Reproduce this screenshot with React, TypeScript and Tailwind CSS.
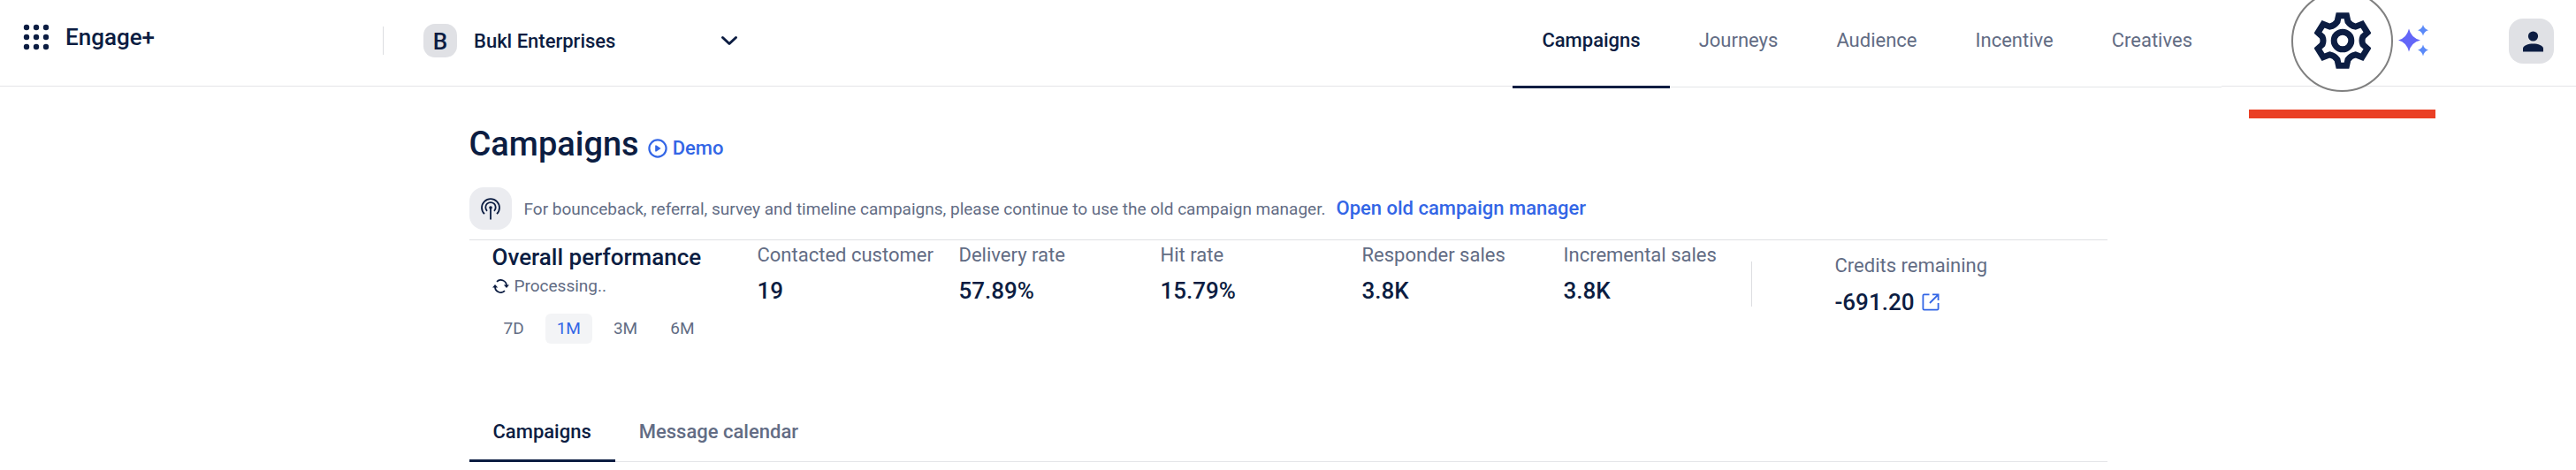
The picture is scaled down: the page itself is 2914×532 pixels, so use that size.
import { useState } from "react";

const navItems = ["Campaigns", "Journeys", "Audience", "Incentive", "Creatives"];

const stats = [
  { label: "Contacted customer", value: "19" },
  { label: "Delivery rate", value: "57.89%" },
  { label: "Hit rate", value: "15.79%" },
  { label: "Responder sales", value: "3.8K" },
  { label: "Incremental sales", value: "3.8K" },
];

const ranges = ["7D", "1M", "3M", "6M"];

const tabs = ["Campaigns", "Message calendar"];

const GridIcon = () => (
  <svg width="30" height="30" viewBox="0 0 30 30" fill="currentColor" aria-hidden="true">
    {[4, 15, 26].map((y) =>
      [4, 15, 26].map((x) => <circle key={`${x}-${y}`} cx={x} cy={y} r="3.2" />)
    )}
  </svg>
);

const ChevronIcon = () => (
  <svg width="20" height="12" viewBox="0 0 20 12" fill="none" stroke="currentColor" strokeWidth="3" strokeLinecap="round" strokeLinejoin="round" aria-hidden="true">
    <path d="M2.5 2.5L10 9.5L17.5 2.5" />
  </svg>
);

const GearIcon = () => (
  <svg width="64" height="64" viewBox="0 0 64 64" fill="none" stroke="currentColor" strokeWidth="7" aria-hidden="true">
    <path d="M27.5 3.7H36.5L38 10.5Q41 15 46.5 16.2L54 13.3L60 23L55 27.5Q53 32 55 36.5L60 41L54 50.7L46.5 47.8Q41 49 38 53.5L36.5 60.3H27.5L26 53.5Q23 49 17.5 47.8L10 50.7L4 41L9 36.5Q11 32 9 27.5L4 23L10 13.3L17.5 16.2Q23 15 26 10.5Z" />
    <circle cx="32" cy="32" r="9.8" />
  </svg>
);

const SparkleIcon = () => (
  <svg width="34" height="36" viewBox="0 0 34 36" aria-hidden="true">
    <path fill="#6366f8" d="M12 4.5Q14.5 15 25 17.5Q14.5 20 12 30.5Q9.5 20 0 17.5Q9.5 15 12 4.5Z" />
    <path fill="#5b8af9" d="M28 0Q29.2 5 34 6.2Q29.2 7.4 28 12.4Q26.8 7.4 22 6.2Q26.8 5 28 0Z" />
    <path fill="#5b8af9" d="M28 22.6Q29.2 27.6 34 28.8Q29.2 30 28 35.5Q26.8 30 22 28.8Q26.8 27.6 28 22.6Z" />
  </svg>
);

const PersonIcon = () => (
  <svg width="23" height="24" viewBox="0 0 23 24" fill="currentColor" aria-hidden="true">
    <circle cx="11.5" cy="6" r="5.6" />
    <path d="M0 23.5V20C0 16.5 6 14.5 11.5 14.5S23 16.5 23 20V23.5Z" />
  </svg>
);

const PlayCircleIcon = () => (
  <svg width="22" height="22" viewBox="0 0 22 22" fill="none" stroke="currentColor" strokeWidth="2.2" aria-hidden="true">
    <circle cx="11" cy="11" r="9.6" />
    <path d="M8.2 7.5H9.5L14.6 11L9.5 14.5H8.2Z" fill="currentColor" stroke="none" />
  </svg>
);

const BroadcastIcon = () => (
  <svg width="24" height="26" viewBox="0 0 24 26" fill="none" stroke="currentColor" strokeWidth="1.8" aria-hidden="true">
    <path d="M5 19.2A10 10 0 1 1 19 19.2" />
    <path d="M8 15.8A5.7 5.7 0 1 1 16 15.8" />
    <path d="M12 12V25.5" />
    <circle cx="12" cy="12" r="1.8" fill="currentColor" stroke="none" />
  </svg>
);

const SyncIcon = () => (
  <svg width="19" height="16" viewBox="0 0 19 16" fill="none" stroke="currentColor" strokeWidth="1.8" aria-hidden="true">
    <path d="M5 2.8A6.5 6.5 0 0 1 16 7.5M14 13.2A6.5 6.5 0 0 1 3 8.5" />
    <path d="M12.8 6.5H19L16 10ZM0 9.5L3 6L6.2 9.5Z" fill="currentColor" stroke="none" />
  </svg>
);

const OpenIcon = () => (
  <svg width="20" height="20" viewBox="0 0 20 20" fill="none" stroke="currentColor" strokeWidth="1.8" aria-hidden="true">
    <path d="M8.5 1.4H2.5Q1.4 1.4 1.4 2.5V17.5Q1.4 18.6 2.5 18.6H17.5Q18.6 18.6 18.6 17.5V11" />
    <path d="M12 1.4H18.6V8M18.6 1.4L9 11" />
  </svg>
);

const Header = () => {
  const [active, setActive] = useState("Campaigns");

  return (
    <header className="relative flex h-[98px] items-center border-b border-[#e4e5e8] pr-[25px] pb-[5px]">
      <div className="flex w-[433px] shrink-0 items-center gap-[18px] pb-2 pl-[26px]">
        <button type="button" aria-label="Apps">
          <GridIcon />
        </button>
        <span className="text-[26px] leading-8 font-medium">Engage+</span>
      </div>
      <div className="h-8 w-px bg-[#dcdde1]" />
      <button type="button" className="ml-[45px] flex w-[356px] shrink-0 items-center text-left">
        <span className="flex size-[38px] items-center justify-center rounded-[13px] bg-[#e0e1e5] pt-px text-[26px] leading-8 font-medium">
          B
        </span>
        <span className="ml-[19px] flex-1 pt-[2px] text-[22px] leading-7 font-medium">Bukl Enterprises</span>
        <ChevronIcon />
      </button>

      <nav className="ml-auto flex h-[99px] shrink-0 items-start self-start border-b border-[#e4e5e8] bg-white">
        {navItems.map((item) => (
          <a
            key={item}
            href="#"
            onClick={() => setActive(item)}
            className={
              item === active
                ? "flex h-[100px] items-center border-b-3 border-[#0c1d42] px-[33px] pb-[6px] text-[22px] font-medium"
                : "flex h-[98px] items-center px-[33px] pb-[7px] text-[22px] text-[#626c84]"
            }
          >
            {item}
          </a>
        ))}
      </nav>
      <button
        type="button"
        aria-label="Settings"
        className="ml-[79px] flex size-[115px] shrink-0 items-center justify-center rounded-full border-2 border-[#808080] bg-white"
      >
        <GearIcon />
      </button>
      <button type="button" aria-label="Assistant" className="ml-[6px]">
        <SparkleIcon />
      </button>
      <button
        type="button"
        aria-label="Account"
        className="ml-[91px] flex size-[51px] shrink-0 items-center justify-center rounded-2xl bg-[#e0e1e5] pt-px pl-[3px]"
      >
        <PersonIcon />
      </button>
      {/* marker under the settings button */}
      <div className="absolute top-[124px] right-[159px] h-[10px] w-[211px] bg-[#ea4025]" />
    </header>
  );
};

const Performance = () => {
  const [range, setRange] = useState("1M");

  return (
    <section className="flex items-start border-t border-[#dfe0e3] pl-[26px]">
      <div className="w-[300px] shrink-0 pt-[3px]">
        <h2 className="text-[26px] leading-8 font-medium">Overall performance</h2>
        <div className="mt-[5px] flex items-center gap-[6px] text-[19px] leading-6">
          <SyncIcon />
          <span className="text-[#626c84]">Processing..</span>
        </div>
        <div className="mt-[19px] flex gap-[11px]">
          {ranges.map((r) => (
            <button
              key={r}
              type="button"
              onClick={() => setRange(r)}
              className={
                r === range
                  ? "h-[34px] rounded-md bg-[#f3f4f6] px-[13px] text-[19px] text-[#3366e6]"
                  : "h-[34px] rounded-md px-[13px] text-[19px] text-[#626c84]"
              }
            >
              {r}
            </button>
          ))}
        </div>
      </div>
      <dl className="flex gap-4 pt-[3px]">
        {stats.map((s) => (
          <div key={s.label} className="w-[212px]">
            <dt className="text-[22px] leading-7 whitespace-nowrap text-[#626c84]">{s.label}</dt>
            <dd className="mt-[10px] text-[26px] leading-8 font-medium">{s.value}</dd>
          </div>
        ))}
      </dl>
      <div className="mt-6 h-[51px] w-px bg-[#dcdde1]" />
      <div className="ml-[94px] pt-[15px]">
        <p className="text-[22px] leading-7 text-[#626c84]">Credits remaining</p>
        <div className="mt-[11px] flex items-center gap-[9px] text-[26px] leading-8 font-medium">
          -691.20
          <a href="#" aria-label="Open credits" className="text-[#3366e6]">
            <OpenIcon />
          </a>
        </div>
      </div>
    </section>
  );
};

export default function App() {
  const [tab, setTab] = useState("Campaigns");

  return (
    <div className="bg-white font-[Roboto,sans-serif] text-[#0c1d42]">
      <Header />
      <main className="mx-auto w-full max-w-[1853px] pt-[41px]">
        <div className="flex items-center gap-[10px]">
          <h1 className="text-[38px] leading-[48px] font-medium">Campaigns</h1>
          <a href="#" className="flex items-center gap-[6px] pt-[10px] text-[22px] leading-7 font-medium text-[#3366e6]">
            <PlayCircleIcon />
            Demo
          </a>
        </div>

        <div className="mt-[25px] mb-[11px] flex items-center">
          <span className="flex size-12 items-center justify-center rounded-2xl bg-[#ebecf0]">
            <BroadcastIcon />
          </span>
          <div className="ml-[14px] flex items-baseline gap-3 leading-7">
            <p className="text-[19px] text-[#626c84]">
              For bounceback, referral, survey and timeline campaigns, please continue to use the old campaign manager.
            </p>
            <a href="#" className="text-[22px] font-medium text-[#3366e6]">
              Open old campaign manager
            </a>
          </div>
        </div>

        <Performance />

        <div role="tablist" className="mt-16 flex h-[70px] items-start border-b border-[#e4e5e8]">
          {tabs.map((t) => (
            <button
              key={t}
              type="button"
              role="tab"
              aria-selected={t === tab}
              onClick={() => setTab(t)}
              className={
                t === tab
                  ? "h-[71px] border-b-4 border-[#0c1d42] px-[27px] pt-1 text-[22px] font-medium"
                  : "h-[71px] border-b-4 border-transparent px-[27px] pt-1 text-[22px] font-medium text-[#626c84]"
              }
            >
              {t}
            </button>
          ))}
        </div>
      </main>
    </div>
  );
}
